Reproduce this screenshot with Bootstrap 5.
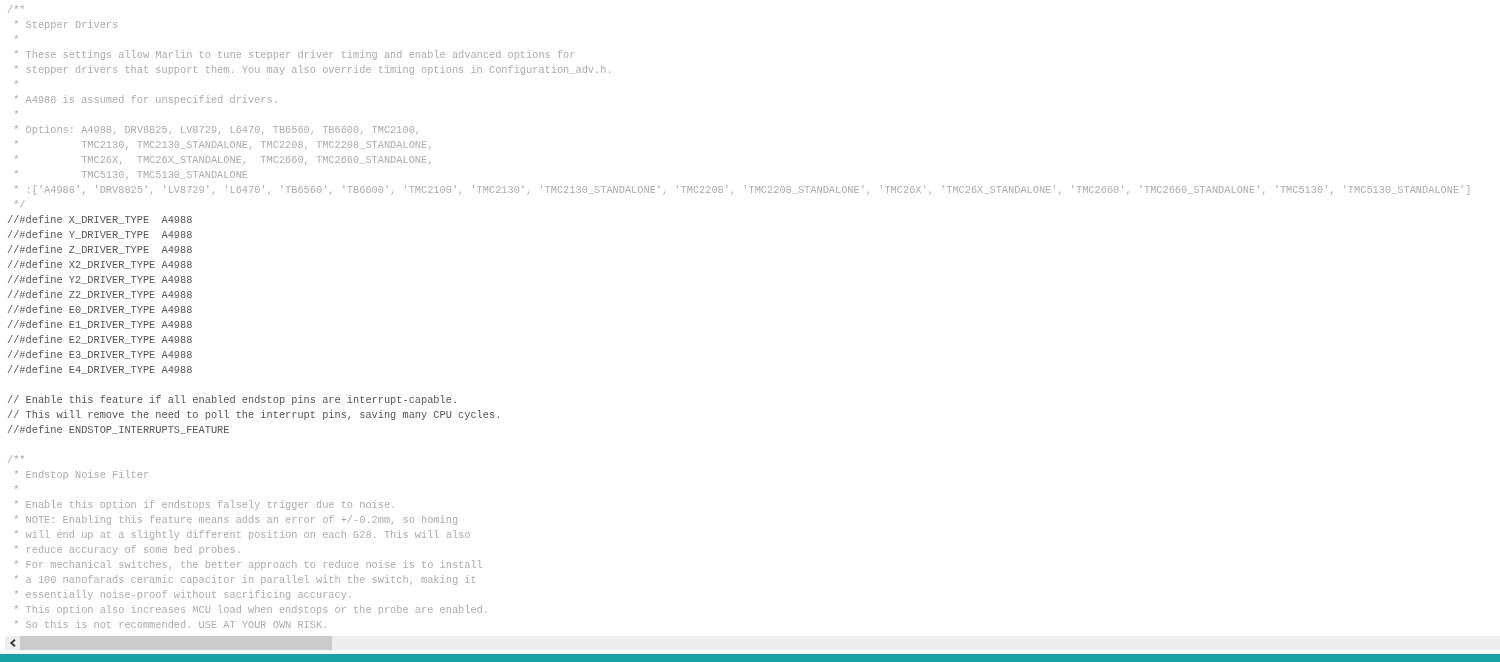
<!DOCTYPE html>
<html lang="en">
<head>
<meta charset="utf-8">
<title>Configuration.h</title>
<link href="https://cdn.jsdelivr.net/npm/bootstrap@5.3.0/dist/css/bootstrap.min.css" rel="stylesheet">
<style>
html,body{height:100%;background:#fff;overflow:hidden}
.code-pane{min-height:0;padding:3px 0 0 7px;background:#fff}
.code-text{margin:0;overflow:visible;font:10.305px/15px "Liberation Mono",monospace;color:#555;white-space:pre;filter:blur(.25px)}
.cmt{color:#a9adad}
.hbar{height:14px;margin-left:5px;background:#eeeef0}
.hbar-arrow{width:15px}
.hbar-thumb{width:312px;background:#cbcbcd}
.gap-strip{height:4px;background:#f9f9f9}
.status-strip{height:8px;background:#17a1a5}
</style>
</head>
<body class="d-flex flex-column">
<div class="code-pane flex-grow-1 overflow-hidden">
<pre class="code-text"><span class="cmt">/**
 * Stepper Drivers
 *
 * These settings allow Marlin to tune stepper driver timing and enable advanced options for
 * stepper drivers that support them. You may also override timing options in Configuration_adv.h.
 *
 * A4988 is assumed for unspecified drivers.
 *
 * Options: A4988, DRV8825, LV8729, L6470, TB6560, TB6600, TMC2100,
 *          TMC2130, TMC2130_STANDALONE, TMC2208, TMC2208_STANDALONE,
 *          TMC26X,  TMC26X_STANDALONE,  TMC2660, TMC2660_STANDALONE,
 *          TMC5130, TMC5130_STANDALONE
 * :['A4988', 'DRV8825', 'LV8729', 'L6470', 'TB6560', 'TB6600', 'TMC2100', 'TMC2130', 'TMC2130_STANDALONE', 'TMC2208', 'TMC2208_STANDALONE', 'TMC26X', 'TMC26X_STANDALONE', 'TMC2660', 'TMC2660_STANDALONE', 'TMC5130', 'TMC5130_STANDALONE']
 */</span>
//#define X_DRIVER_TYPE  A4988
//#define Y_DRIVER_TYPE  A4988
//#define Z_DRIVER_TYPE  A4988
//#define X2_DRIVER_TYPE A4988
//#define Y2_DRIVER_TYPE A4988
//#define Z2_DRIVER_TYPE A4988
//#define E0_DRIVER_TYPE A4988
//#define E1_DRIVER_TYPE A4988
//#define E2_DRIVER_TYPE A4988
//#define E3_DRIVER_TYPE A4988
//#define E4_DRIVER_TYPE A4988

// Enable this feature if all enabled endstop pins are interrupt-capable.
// This will remove the need to poll the interrupt pins, saving many CPU cycles.
//#define ENDSTOP_INTERRUPTS_FEATURE

<span class="cmt">/**
 * Endstop Noise Filter
 *
 * Enable this option if endstops falsely trigger due to noise.
 * NOTE: Enabling this feature means adds an error of +/-0.2mm, so homing
 * will end up at a slightly different position on each G28. This will also
 * reduce accuracy of some bed probes.
 * For mechanical switches, the better approach to reduce noise is to install
 * a 100 nanofarads ceramic capacitor in parallel with the switch, making it
 * essentially noise-proof without sacrificing accuracy.
 * This option also increases MCU load when endstops or the probe are enabled.
 * So this is not recommended. USE AT YOUR OWN RISK.</span></pre>
</div>
<div class="hbar d-flex flex-shrink-0">
  <div class="hbar-arrow d-flex align-items-center justify-content-center">
    <svg width="8" height="8" viewBox="0 0 8 8"><path d="M6 .8 2.2 4 6 7.2" fill="none" stroke="#333" stroke-width="1.8"/></svg>
  </div>
  <div class="hbar-thumb"></div>
</div>
<div class="gap-strip flex-shrink-0"></div>
<div class="status-strip flex-shrink-0"></div>
<script src="https://cdn.jsdelivr.net/npm/bootstrap@5.3.0/dist/js/bootstrap.bundle.min.js"></script>
</body>
</html>
